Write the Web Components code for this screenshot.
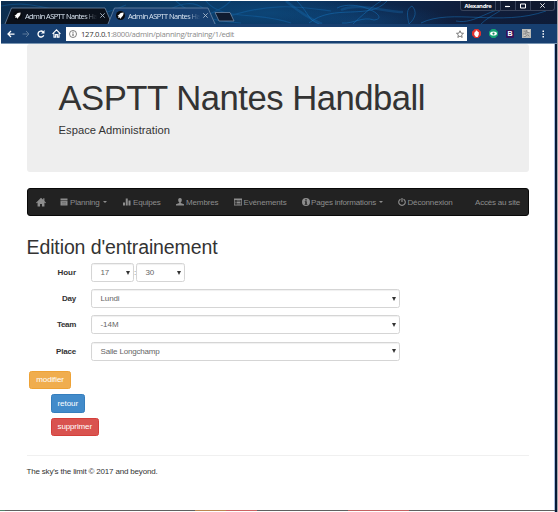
<!DOCTYPE html>
<html lang="fr"><head><meta charset="utf-8"><title>ASPTT Nantes Handball</title>
<style>
html,body{margin:0;background:#fff}
body{width:558px;height:512px;overflow:hidden;font-family:"Liberation Sans",Arial,sans-serif;font-size:8px;color:#333}
</style></head><body>
<app-window></app-window>
<script>
const define=(name,html,setup)=>customElements.define(name,class extends HTMLElement{
  connectedCallback(){
    if(this.shadowRoot)return;
    const t=document.createElement('template');
    t.innerHTML=typeof html==='function'?html(this):html;
    this.attachShadow({mode:'open'}).append(t.content.cloneNode(true));
    if(setup)setup(this);
  }
});

/* Single line of text whose tracking is adjusted to fill the width in "w". */
define('fit-text','<style>:host{display:block;flex:none;white-space:nowrap}span{display:inline-block}</style><span><slot></slot></span>',el=>{
  const s=el.shadowRoot.querySelector('span'),w=+el.getAttribute('w');
  el.style.width=w+'px';
  s.style.letterSpacing=(w-s.getBoundingClientRect().width)/el.textContent.length+'px';
});

const icons={
 home:'<path d="M8 1 0 9l1.200 1L2.500 8.700V15h4v-4h3v4h4V8.700L15 10l1-1-2.500-2.500V2h-2v2.500z"/>',
 calendar:'<path d="M1 1h14v4H1zM1 6h14v9H1z"/><path d="M1 5.500h14M4 9h8M4 12h8" stroke="#4a4a4a" stroke-width=".7"/>',
 stats:'<path d="M0 9h4v6H0zM5.500 1h4v14h-4zM11 5h4v10h-4z"/>',
 user:'<path d="M8 0c-3 0-4 2-3.500 5 .2 2 1 3 2 4v1L0 12.500V15h16v-2.500L9.500 10V9c1-1 1.800-2 2-4C12 2 11 0 8 0z"/>',
 list:'<path fill-rule="evenodd" d="M0 1h16v14H0zM1.500 4v9.500h13V4z"/><path d="M3 5h2v2H3zM6 5h7v2H6zM3 8h2v2H3zM6 8h7v2H6zM3 11h2v2H3zM6 11h7v2H6z"/>',
 info:'<path fill-rule="evenodd" d="M8 0a8 8 0 1 0 0 16A8 8 0 0 0 8 0zM6.500 2.500h3V5h-3zM5.500 6.500h4V12h1.200v1.500H5.300V12h1.200V8h-1z"/>',
 power:'<path d="M5 2.500a6.500 6.500 0 1 0 6 0M8 0v8" fill="none" stroke="currentColor" stroke-width="2.300"/>',
 back:'<path d="M15 8H2M8 2 2 8l6 6" fill="none" stroke="currentColor" stroke-width="2.500"/>',
 forward:'<path d="M1 8h13M8 2l6 6-6 6" fill="none" stroke="currentColor" stroke-width="2"/>',
 reload:'<path d="M13.500 10.500A6 6 0 1 1 12 3.500" fill="none" stroke="currentColor" stroke-width="2.600"/><path d="M15 0v7H8z"/>',
 house:'<path d="M1 8.500 8 1.500l7 7M3.500 8v6.500H6.500V10h3v4.500h3V8" fill="none" stroke="currentColor" stroke-width="2"/>',
 page:'<circle cx="8" cy="8" r="7" fill="none" stroke="currentColor" stroke-width="1.500"/><path d="M7 7h2v5H7zM7 3.500h2v2H7z"/>',
 star:'<path d="m8 1.500 2 4.700 5 .4-3.800 3.300 1.200 5L8 12.200 3.600 14.900l1.200-5L1 6.600l5-.4z" fill="none" stroke="currentColor" stroke-width="1.500"/>',
 rocket:'<circle cx="8" cy="8" r="8" fill="#080a0e"/><path fill="#fff" d="M13.500 2.500C9 2.500 7 4 5.500 6.500L2.500 8l2 1L4 12.500l3-1L8 14l2-3.500C12.500 8.500 13.500 6.500 13.500 2.500z"/>',
 close:'<path d="m3 3 10 10M13 3 3 13" stroke="currentColor" stroke-width="2"/>',
 block:'<path d="M5 0h6l5 5v6l-5 5H5l-5-5V5z" fill="#e0322f"/><path fill="#fff" d="M5 5h1.500V3H8V2h1v2h1.500v1.500H12V10l-2 4H7L4 10V8z"/>',
 eye:'<path d="M5 0h6l5 5v6l-5 5H5l-5-5V5z" fill="#16a274"/><ellipse cx="8" cy="8" rx="6" ry="3.700" fill="#fff"/><circle cx="8" cy="8" r="2" fill="#16805e"/>',
 pic:'<path fill="#b9b9b5" d="M0 0h16v16H0z"/><path d="M2 9h5V3h2v3h4M3 13h4l3-3 3 3M3 4h2" fill="none" stroke="#737477" stroke-width="1.300"/><path fill="#e2e2df" d="M3 10h3v2H3zM10 2h4v3h-4z"/>',
 dots:'<path d="M7 1h3v3H7zM7 6.500h3v3H7zM7 12h3v3H7z"/>'
};
define('ui-icon',el=>`<style>:host{display:block;flex:none;width:${el.getAttribute('size')||8}px;height:${el.getAttribute('size')||8}px}svg{display:block;width:100%;height:100%}</style><svg viewBox="0 0 16 16" fill="currentColor">${icons[el.getAttribute('name')]}</svg>`);

define('browser-tab',`<style>
:host{display:block;width:108px;height:17px;color:#dbe6f2;font:7.400px "Open Sans","Noto Sans",sans-serif}
.g{display:grid;grid-template:17px/108px}.g>*{grid-area:1/1}
svg{overflow:visible}path{fill:var(--tab,#0b111b);stroke:#7189a6;stroke-width:.8}
.r{display:flex;align-items:center;padding-left:8px}
ui-icon[name=rocket]{margin-right:3px}.t{-webkit-mask-image:linear-gradient(90deg,#000 82%,transparent)}
ui-icon[name=close]{margin-left:2px;color:#b1c0d0}
</style><div class="g"><svg width="108" height="17"><path d="M0 17 6.500 1H100l7 16"/></svg><div class="r"><ui-icon name="rocket" size="9"></ui-icon><fit-text class="t" w="72">Admin ASPTT Nantes Ha</fit-text><ui-icon name="close" size="7"></ui-icon></div></div>`);

define('browser-chrome',`<style>
:host{display:block;height:43px;color:#fff}
.strip{display:grid;grid-template:24px/556px;height:23px;margin-top:1px;background:radial-gradient(ellipse 110px 22px at 270px 12px,#0d568e88,transparent),radial-gradient(ellipse 90px 18px at 360px 20px,#12508a77,transparent),linear-gradient(90deg,#0c2e50,#0b3a65 30%,#0b2c55 60%,#101d3a 85%,#0e1c38);overflow:hidden}
.strip>*{grid-area:1/1}
.waves path{fill:none;stroke:#1674bd}
.row{display:flex;align-items:flex-start}
.tabs{padding:6px 0 0 4px}
.second{margin-left:-5px;--tab:#173f70}
.new{margin:0 0 0 -3px}
.win{margin-left:auto;margin-right:2px;display:flex;height:10px;border:1px solid #39445c;border-top:0;border-radius:0 0 3px 3px;background:#101a30;box-sizing:border-box;margin-top:-6px}
.win>*{display:flex;align-items:center;justify-content:center;border-left:1px solid #39445c;box-sizing:border-box}
.win>.name{width:35px;font:bold 5.900px "Open Sans",sans-serif;border-left:0;border-right:1px solid #39445c}
.b{width:15px}.x{width:24px}
.bar{height:19px;background:#173f70;display:flex;align-items:center;box-sizing:border-box;padding:0 5px 0 6px}
.nav{display:flex;width:59px;gap:7px;align-items:center}
.addr{width:401px;height:14px;background:#fff;display:flex;align-items:center;color:#555;font:7.700px "Open Sans",sans-serif;margin-right:5px}
.addr .p{margin:0 4px 0 3px}.addr .u{color:#8a8a8a}.addr b{font-weight:400;color:#333}
.addr .s{margin-left:auto;margin-right:3px}
.ext{display:flex;gap:8px;align-items:center;flex:1}
.boot{width:8px;height:8px;background:#34145b;border-radius:1px;font:bold 7px/8px "Liberation Sans",sans-serif;text-align:center}
</style>
<div class="strip"><svg class="waves" width="556" height="23"><path d="M0 5C50-5 70 30 125 4M150 22C175 0 200-8 215 24M175 0c15 14 35 20 65 22M190 22c20-10 35-15 40-23M205 0c15 20 50 10 85 22M220 18C270 0 300 6 330 10" stroke-width="1.200" opacity=".35"/><path d="M296 0c14 15 10 18 22 23M308 22c25-20 60-2 78-22M336 7c20-10 55 10 37 12-12-4-20 4-32 3M352 23c8-8 20-18 28-23M408 23c-2-9-3-15 3-18 5 5 4 12-3 18M420 22c30-15 80 4 125-12M455 20c20 4 35-15 55-12M480 23c10-10 25-14 30-23" opacity=".5"/><path d="M285 0c12 10 22 17 36 23M340 9c15-8 45 2 62 2" opacity=".3" stroke-width="2.500"/></svg>
<div class="row tabs"><browser-tab></browser-tab><browser-tab class="second"></browser-tab><svg class="new" width="24" height="17"><path d="M2 5.500h15l4 8.500H6z" fill="#101c30" stroke="#7189a6" stroke-width=".8"/></svg>
<div class="win"><div class="name"><fit-text w="27">Alexandre</fit-text></div><div class="b" style="margin-left:4px"><svg width="6" height="6"><path d="M0 3.500h5" stroke="#fff" stroke-width="1.200"/></svg></div><div class="b"><svg width="6" height="6"><path d="M.5 1h5v4h-5z" fill="none" stroke="#fff"/></svg></div><div class="x"><ui-icon name="close" size="7"></ui-icon></div></div></div></div>
<div class="bar"><div class="nav"><ui-icon name="back" size="8"></ui-icon><ui-icon name="forward" size="8" style="color:#5b7899"></ui-icon><ui-icon name="reload" size="8"></ui-icon><ui-icon name="house" size="9"></ui-icon></div>
<div class="addr"><ui-icon class="p" name="page" size="8"></ui-icon><fit-text class="u" w="153"><b>127.0.0.1</b>:8000/admin/planning/training/1/edit</fit-text><ui-icon class="s" name="star" size="8"></ui-icon></div>
<div class="ext"><ui-icon name="block" size="9"></ui-icon><ui-icon name="eye" size="9"></ui-icon><div class="boot">B</div><ui-icon name="pic" size="9"></ui-icon><ui-icon name="dots" size="8"></ui-icon></div></div>`);

define('page-hero',`<style>:host{display:block;height:128px;background:#eee;border-radius:3px;padding:34px 32px 0;box-sizing:border-box}
h1,p{margin:0;font-weight:400}h1{font-size:34.700px;line-height:40px}p{font-size:11.200px;line-height:13px;margin-top:6px}</style>
<h1><fit-text w="366.500">ASPTT Nantes Handball</fit-text></h1><p><fit-text w="111.500">Espace Administration</fit-text></p>`);

define('nav-item',el=>`<style>:host{display:flex;align-items:center;flex:none;box-sizing:border-box;gap:2px}i{width:0;margin-left:1px;border:2px solid transparent;border-top-color:currentColor;border-bottom:0}</style>
${el.hasAttribute('icon')?`<ui-icon name="${el.getAttribute('icon')}" size="${el.getAttribute('size')||8}"></ui-icon>`:''}<slot></slot>${el.hasAttribute('caret')?'<i></i>':''}`);

define('main-nav',`<style>:host{display:flex;height:28px;box-sizing:border-box;background:#222;border:1px solid #090909;border-radius:3px;color:#8d8d8d;padding-left:8px}.tight{gap:1.500px}</style>
<nav-item icon="home" size="10" style="width:24.500px"></nav-item>
<nav-item icon="calendar" caret style="width:63px"><fit-text w="29.500">Planning</fit-text></nav-item>
<nav-item icon="stats" style="width:53px"><fit-text w="27.500">Equipes</fit-text></nav-item>
<nav-item icon="user" style="width:58px"><fit-text w="32.500">Membres</fit-text></nav-item>
<nav-item class="tight" icon="list" style="width:67.500px"><fit-text w="43">Evénements</fit-text></nav-item>
<nav-item class="tight" icon="info" caret style="width:96.500px"><fit-text w="65">Pages informations</fit-text></nav-item>
<nav-item class="tight" icon="power" style="width:77px"><fit-text w="45">Déconnexion</fit-text></nav-item>
<nav-item><fit-text w="45">Accès au site</fit-text></nav-item>`);

define('select-box',`<style>:host{display:flex;align-items:center;justify-content:space-between;box-sizing:border-box;height:19px;border:1px solid #d5d5d5;border-radius:2.500px;background:#fff;color:#666;padding:0 3px 0 8.500px;box-shadow:inset 0 1px 1px #f0f0f0}
i{border:2px solid transparent;border-top:4px solid #333;border-bottom:0}</style><slot></slot><i></i>`);

define('form-row',el=>`<style>:host{display:grid;grid-template-columns:49.500px 309px;column-gap:15px;align-items:center;height:19px}
label{font-weight:700;display:flex;justify-content:flex-end;color:#333}div{display:flex;align-items:center}::slotted(select-box){flex:1}::slotted(.hour){flex:none;width:43px}::slotted(.minute){flex:none;width:49px}</style>
<label><fit-text w="${el.getAttribute('w')}">${el.getAttribute('label')}</fit-text></label><div><slot></slot></div>`);

define('action-button',`<style>:host{display:flex;align-items:center;justify-content:center;box-sizing:border-box;height:18.500px;border:1px solid var(--edge);background:var(--fill);border-radius:2.500px;color:#fff}</style><slot></slot>`);

define('app-window',`<style>
:host{display:grid;grid-template-columns:1px 553px 1px 2px 1px;height:512px;grid-template-rows:44px 466px 2px}
browser-chrome{grid-column:2/5;grid-row:1;box-shadow:0 1px #7894b1;z-index:1}
.page{grid-column:2;grid-row:2;padding:0 25.500px;box-sizing:border-box}
.hair{grid-column:3;grid-row:2/4;background:#abc0df}.edge{grid-column:4;grid-row:2/4;background:#061936}.outer{grid-column:5;grid-row:1/4;background:#a3a4a9}
main-nav{margin-top:16px}
h2{font-size:19.500px;font-weight:400;line-height:23px;margin:20px 0 4px}
.form{display:grid;gap:7.200px}
.actions{display:grid;gap:5px;margin-top:10px;padding-left:2.500px;justify-items:start}
.colon{width:2px;color:#777}
.foot{border-top:1px solid #f0f0f0;margin-top:18.500px;padding-top:11.500px;line-height:9px}
.bottom{grid-column:1/4;grid-row:3;height:1px;margin-top:0;background:linear-gradient(90deg,#51836b 5px,#606060 5px 195px,#bc8750 195px 226px,#cc6262 226px 257px,#606060 257px 348px,#c46262 348px 409px,#606060 409px)}
</style>
<browser-chrome></browser-chrome>
<div class="page"><page-hero></page-hero><main-nav></main-nav>
<h2><fit-text w="191">Edition d'entrainement</fit-text></h2>
<div class="form">
<form-row label="Hour" w="18.500"><select-box class="hour"><fit-text w="8.500">17</fit-text></select-box><span class="colon">:</span><select-box class="minute"><fit-text w="8.500">30</fit-text></select-box></form-row>
<form-row label="Day" w="14"><select-box><fit-text w="19">Lundi</fit-text></select-box></form-row>
<form-row label="Team" w="19"><select-box><fit-text w="18">-14M</fit-text></select-box></form-row>
<form-row label="Place" w="20"><select-box><fit-text w="59">Salle Longchamp</fit-text></select-box></form-row></div>
<div class="actions">
<action-button style="width:42px;--fill:#f0ad4e;--edge:#eea236"><fit-text w="27.500">modifier</fit-text></action-button>
<action-button style="width:34.500px;margin-left:21.500px;--fill:#428bca;--edge:#357ebd"><fit-text w="20.500">retour</fit-text></action-button>
<action-button style="width:48.500px;margin-left:21.500px;--fill:#d9534f;--edge:#d43f3a"><fit-text w="34.500">supprimer</fit-text></action-button></div>
<div class="foot"><fit-text w="131">The sky's the limit © 2017 and beyond.</fit-text></div></div>
<div class="hair"></div><div class="edge"></div><div class="outer"></div><div class="bottom"></div>`);
</script></body></html>
